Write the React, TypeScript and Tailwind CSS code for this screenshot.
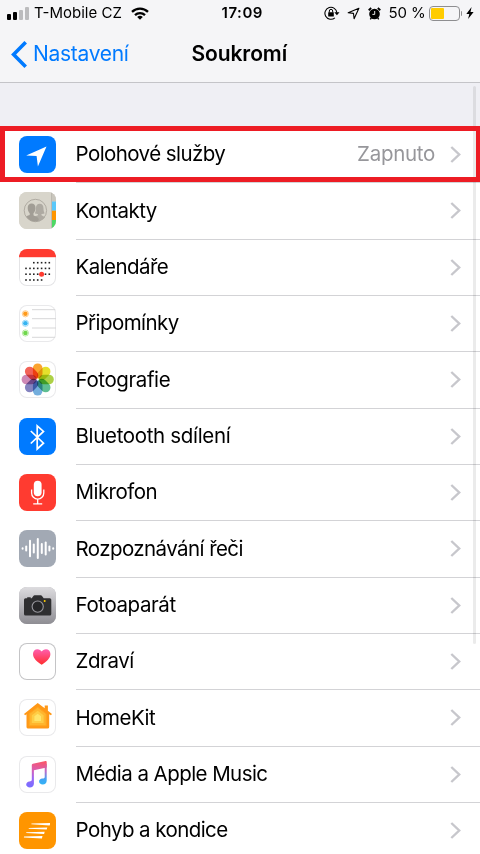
import type { ReactNode } from "react";

interface SettingsItem {
  label: string;
  icon: ReactNode;
  /** Tailwind classes for the tile behind the glyph */
  tile: string;
  labelClass: string;
  value?: string;
}

const CALENDAR_COLUMNS = [7, 11, 14.8, 18.7, 22.6, 26.5, 30.3];
const CALENDAR_ROWS = [
  { y: 13.7, from: 2, to: 7 },
  { y: 19.4, from: 0, to: 7 },
  { y: 25.2, from: 0, to: 7 },
  { y: 31, from: 0, to: 5 },
];

const PETALS = ["#fa9f24", "#e4df20", "#a9cf3c", "#55bb8c", "#6caadb", "#7d7cbc", "#cc83b2", "#f2594e"];

// [x, half height]
const WAVE_BARS = [
  [3.6, 0.3],
  [7.2, 2],
  [11, 7.7],
  [14.8, 4],
  [18.8, 9.6],
  [22.8, 4.4],
  [26.7, 6],
  [30.4, 2],
  [34.2, 0.3],
];

function Glyph({ children }: { children: ReactNode }) {
  return (
    <svg viewBox="0 0 37 37" className="block h-[37px] w-[37px]">
      {children}
    </svg>
  );
}

const LocationIcon = () => (
  <Glyph>
    <path d="M27.5 10.5 7.2 19.4l10.4.5 1.3 10.6z" fill="#fff" />
  </Glyph>
);

const ContactsIcon = () => (
  <Glyph>
    <rect width="37" height="37" fill="#d8d5cb" />
    <rect x="32" width="1" height="37" fill="#bcb9b0" />
    <rect x="33" width="4" height="9.5" fill="#c9c6bd" />
    <rect x="33" y="9.5" width="4" height="9.2" fill="#5ac8fa" />
    <rect x="33" y="18.7" width="4" height="9.3" fill="#ff9500" />
    <rect x="33" y="28" width="4" height="9" fill="#4cd964" />
    <circle cx="16.4" cy="18.5" r="11.2" fill="none" stroke="#aaa69d" strokeWidth="0.9" />
    <path
      d="M20.700 11.800c2.500 0 3.800 1.800 3.800 4.600 0 2.200.4 3.800 1.200 4.700-.7.8-2 .9-3.200.8v1.400c1 .8 2.700 1 3.600 2-1.700 2.400-4.200 3.800-7.300 4.200l-2.600-5.300c.9-.4 2-.5 2.700-.9v-1.400c-1.200.1-2.500 0-3.200-.8.8-.9 1.200-2.500 1.200-4.700 0-2.800 1.300-4.600 3.800-4.600z"
      fill="#aeaaa2"
    />
    <path
      d="M12.600 11.600c2.500 0 3.900 1.700 3.900 4.500 0 2.300-.8 4-2 5.200v1.900c1.500 1.100 4.800 1.300 5.300 4.200l-1 1.900c-4.800 1-9.200-.8-11.600-4.700 1-1 2.700-.9 3.500-1.500v-1.800c-1.200-1.200-2-2.900-2-5.200 0-2.800 1.400-4.500 3.900-4.500z"
      fill="#a19d95"
    />
  </Glyph>
);

const CalendarIcon = () => (
  <Glyph>
    <rect width="37" height="8.2" fill="#ff3b30" />
    {CALENDAR_ROWS.map((row) =>
      CALENDAR_COLUMNS.slice(row.from, row.to).map((x) => (
        <rect key={`${x}-${row.y}`} x={x - 0.8} y={row.y - 0.8} width="1.6" height="1.6" fill="#222" />
      ))
    )}
    <circle cx="22.6" cy="25.2" r="2.5" fill="#ff3b30" />
  </Glyph>
);

const RemindersIcon = () => (
  <Glyph>
    {[4.7, 13.7, 23, 32.3].map((y) => (
      <path key={y} d={`M13 ${y}H37`} stroke="#d2d2d4" strokeWidth="0.9" />
    ))}
    {[
      { y: 8.8, color: "#ff9a1a" },
      { y: 18.3, color: "#35b4f2" },
      { y: 28, color: "#70d84c" },
    ].map(({ y, color }) => (
      <g key={y}>
        <circle cx="6.4" cy={y} r="3.1" fill="none" stroke={color} strokeWidth="0.7" opacity="0.7" />
        <circle cx="6.4" cy={y} r="2.3" fill={color} />
      </g>
    ))}
  </Glyph>
);

const PhotosIcon = () => (
  <Glyph>
    {PETALS.map((color, i) => (
      <rect
        key={color}
        x="13.9"
        y="2.4"
        width="9.6"
        height="15"
        rx="4.8"
        fill={color}
        opacity="0.95"
        transform={`rotate(${i * 45} 18.7 18.5)`}
        className="mix-blend-multiply"
      />
    ))}
  </Glyph>
);

const BluetoothIcon = () => (
  <Glyph>
    <path d="M11.800 13 24.500 25.200 18.200 31V7.800l6.300 5.600L11.800 25.500" fill="none" stroke="#fff" strokeWidth="1.700" />
  </Glyph>
);

const MicrophoneIcon = () => (
  <Glyph>
    <rect x="14.800" y="6.800" width="7.800" height="15.400" rx="3.900" fill="#fff" />
    <path d="M12.600 15.500v3.500a6.100 6.100 0 0 0 12.200 0v-3.500M18.700 25.200v4.700M14.200 29.900h9" fill="none" stroke="#fff" strokeWidth="1.300" />
  </Glyph>
);

const SpeechIcon = () => (
  <Glyph>
    {WAVE_BARS.map(([x, h]) => (
      <path key={x} d={`M${x} ${18.5 - h}V${18.5 + h}`} stroke="#fff" strokeWidth="2" strokeLinecap="round" />
    ))}
  </Glyph>
);

const CameraIcon = () => (
  <Glyph>
    <defs>
      <linearGradient id="camera" x1="0" y1="0" x2="0" y2="1">
        <stop offset="0" stopColor="#dddcdf" />
        <stop offset="1" stopColor="#8e8d93" />
      </linearGradient>
    </defs>
    <rect width="37" height="37" fill="url(#camera)" />
    <path
      d="M6.500 11.300h1.700v-1.100h3.500v1.100h1l1.700-2.400q.4-.6 1.200-.6h6.200q.8 0 1.200.6l1.700 2.400h6.100q1.500 0 1.500 1.500v14.300q0 1.500-1.500 1.500H6.500Q5 28.600 5 27.100V12.800q0-1.500 1.500-1.500z"
      fill="#2f2f31"
    />
    <circle cx="18.700" cy="19.600" r="5.600" fill="#252527" stroke="#98979d" strokeWidth="1.100" />
    <circle cx="25.700" cy="14" r="1" fill="#ffcc00" />
  </Glyph>
);

const HealthIcon = () => (
  <Glyph>
    <defs>
      <linearGradient id="heart" x1="0" y1="0" x2="0" y2="1">
        <stop offset="0" stopColor="#ff5fb0" />
        <stop offset="1" stopColor="#ff2d2d" />
      </linearGradient>
    </defs>
    <path
      d="M22.700 21.700c-5.200-3.300-8.700-6.600-8.700-10.700 0-2.900 2-4.800 4.400-4.800 2 0 3.500.9 4.300 2.400.8-1.500 2.300-2.400 4.300-2.400 2.400 0 4.400 1.900 4.400 4.800 0 4.100-3.500 7.400-8.700 10.700z"
      fill="url(#heart)"
    />
  </Glyph>
);

const HomeKitIcon = () => (
  <Glyph>
    <path
      d="M18.700 4 25.700 9.300V6.500h3.200v5.300l4.100 3.100-1.100 1.400-1.700-1.100v12.700q0 1.700-1.700 1.700H9.200q-1.700 0-1.700-1.700V15.200l-1.400 1.100L5 14.900z"
      fill="#ff9817"
    />
    <path d="M18.700 8.300 27.200 14.800v12H10.200v-12z" fill="#ffb52e" stroke="#ffa51f" strokeWidth="1" />
    <path d="M18.700 11.700 24.600 16.200v7.800H12.800v-7.800z" fill="#ffcd45" />
    <path d="M18.700 14.700 22 17.300v4.800h-6.600v-4.800z" fill="#ffe46a" />
  </Glyph>
);

const MusicIcon = () => (
  <Glyph>
    <defs>
      <linearGradient id="note" gradientUnits="userSpaceOnUse" x1="22" y1="5" x2="17" y2="31">
        <stop offset="0" stopColor="#fb5568" />
        <stop offset="0.400" stopColor="#d75fb4" />
        <stop offset="0.700" stopColor="#9d67f5" />
        <stop offset="1" stopColor="#7a6cff" />
      </linearGradient>
      <linearGradient id="noteRight" gradientUnits="userSpaceOnUse" x1="26" y1="5" x2="26" y2="28">
        <stop offset="0" stopColor="#fb5568" />
        <stop offset="0.450" stopColor="#b96bcb" />
        <stop offset="0.800" stopColor="#3fa5f5" />
        <stop offset="1" stopColor="#35b2f5" />
      </linearGradient>
    </defs>
    <path
      d="M12.800 9q0-1.100 1.100-1.300L26.600 5q1.100-.2 1.100.9v5.600l-12.800 2.700v13.500c0 2.300-1.800 3.800-4 3.800-2.100 0-3.700-1.200-3.700-2.900 0-1.800 1.400-2.900 3.200-3.200 1.400-.2 2.400-.4 2.400-1.700z"
      fill="url(#note)"
    />
    <path
      d="M25.700 8.500l2-1v17c0 2.600-1.600 4-4 4-2.200 0-3.600-1.200-3.600-2.900 0-1.700 1.300-2.700 3.200-3 1.400-.3 2.400-.4 2.400-1.700z"
      fill="url(#noteRight)"
    />
  </Glyph>
);

const MotionIcon = () => (
  <Glyph>
    <path
      d="M12.500 11.400 31 11v1.600l-.4 1-18.300-1.300zM9.800 15.900l18.500-.5-.6 2.200-18-.9zM7.300 20.200l18.400-.5-.6 2.200-17.900-.9zM5 24.500l18.500-.5-.6 2.400L4.900 25.400z"
      fill="#fff"
    />
  </Glyph>
);

const ITEMS: SettingsItem[] = [
  { label: "Polohové služby", icon: <LocationIcon />, tile: "bg-[#007aff]", labelClass: "tracking-[-0.57px]", value: "Zapnuto" },
  { label: "Kontakty", icon: <ContactsIcon />, tile: "bg-[#d8d5cb]", labelClass: "tracking-[-0.54px]" },
  { label: "Kalendáře", icon: <CalendarIcon />, tile: "bg-white inset-ring inset-ring-[#e4e4e6]", labelClass: "tracking-[-0.55px]" },
  { label: "Připomínky", icon: <RemindersIcon />, tile: "bg-white inset-ring inset-ring-[#e9e9eb]", labelClass: "tracking-[-0.55px]" },
  { label: "Fotografie", icon: <PhotosIcon />, tile: "bg-white inset-ring inset-ring-[#e9e9eb]", labelClass: "tracking-[-0.4px]" },
  { label: "Bluetooth sdílení", icon: <BluetoothIcon />, tile: "bg-[#007aff]", labelClass: "tracking-[-0.33px]" },
  { label: "Mikrofon", icon: <MicrophoneIcon />, tile: "bg-[#ff3b30]", labelClass: "tracking-[-0.54px]" },
  { label: "Rozpoznávání řeči", icon: <SpeechIcon />, tile: "bg-[#a2a9b4]", labelClass: "tracking-[-0.58px]" },
  { label: "Fotoaparát", icon: <CameraIcon />, tile: "bg-[#b5b4b9]", labelClass: "tracking-[-0.4px]" },
  { label: "Zdraví", icon: <HealthIcon />, tile: "bg-white inset-ring inset-ring-[#c4c4c6]", labelClass: "tracking-[-0.42px]" },
  { label: "HomeKit", icon: <HomeKitIcon />, tile: "bg-white inset-ring inset-ring-[#e9e9eb]", labelClass: "tracking-[-0.5px]" },
  { label: "Média a Apple Music", icon: <MusicIcon />, tile: "bg-white inset-ring inset-ring-[#e9e9eb]", labelClass: "tracking-[-0.56px]" },
  { label: "Pohyb a kondice", icon: <MotionIcon />, tile: "bg-[#ff9500]", labelClass: "tracking-[-0.57px]" },
];

function StatusBar() {
  return (
    <div className="flex h-[26px] items-center pl-[7px] pr-1.5 text-[15px] text-black">
      <div className="flex w-[214.500px] items-center">
        <div className="flex h-[13px] items-end gap-[2px]">
          <span className="h-[6px] w-[4px] rounded-[1px] bg-black" />
          <span className="h-[8px] w-[4px] rounded-[1px] bg-black" />
          <span className="h-[10px] w-[4px] rounded-[1px] bg-[#bcbcbe]" />
          <span className="h-[13px] w-[4px] rounded-[1px] bg-[#bcbcbe]" />
        </div>
        <span className="ml-[5px] whitespace-nowrap">T-Mobile CZ</span>
        <svg viewBox="0 0 18 13" className="ml-[9px] h-[13px] w-[18px]">
          <g fill="none" stroke="#000" strokeWidth="2.300">
            <path d="M1 4.900a11.500 11.500 0 0 1 16 0" />
            <path d="M4 8.200a7.200 7.200 0 0 1 10 0" />
          </g>
          <path d="M9 12.800 6.200 10a4 4 0 0 1 5.600 0z" />
        </svg>
      </div>
      <span className="font-semibold tracking-[0.55px]">17:09</span>
      <div className="flex flex-1 items-center justify-end">
        {/* rotation lock */}
        <svg viewBox="0 0 16 14" className="h-[14px] w-[16px]" fill="none" stroke="#000">
          <path d="M10.900 11.800A6 6 0 1 1 12.900 6.800" strokeWidth="1.100" />
          <path d="M10.300 6.200h5.200L12.900 9.300z" fill="#000" stroke="none" />
          <rect x="4.200" y="6.200" width="5.600" height="4.200" rx="0.500" fill="#000" stroke="none" />
          <path d="M5.300 6.500V5a1.700 1.700 0 0 1 3.400 0v1.500" strokeWidth="1" />
        </svg>
        <svg viewBox="0 0 13 13" className="ml-[7px] h-[13px] w-[13px]" fill="none" stroke="#000">
          <path d="M11.900 1.200 1.200 5.800l5.300.6.600 5.400z" strokeWidth="1.100" strokeLinejoin="round" />
        </svg>
        {/* alarm */}
        <svg viewBox="0 0 13 13" className="ml-[8px] h-[13px] w-[13px]">
          <circle cx="6.500" cy="7" r="5.300" />
          <path d="M.700 3.200 3.200 1M12.300 3.200 9.800 1" stroke="#000" strokeWidth="1.800" />
          <path d="M3.300 10.800 2.300 12.400M9.700 10.800l1 1.600" stroke="#000" strokeWidth="1.400" />
          <path d="M6.700 4v3.400H4.400" fill="none" stroke="#fff" strokeWidth="0.900" />
        </svg>
        <span className="ml-[8px] whitespace-nowrap tracking-[-0.15px]">50 %</span>
        <div className="ml-[3px] flex h-[15px] w-[31px] rounded-[4px] border border-[#8e8e90] p-[1px]">
          <span className="w-[13px] rounded-[1px] bg-[#ffcc00]" />
        </div>
        <span className="ml-[1px] h-[5px] w-[1.500px] rounded-r-full bg-[#8e8e90]" />
        <svg viewBox="0 0 8 12" className="ml-[4px] h-[12px] w-[8px]">
          <path d="M5.600 0 .3 6.900h3L2.100 12l5.500-7H4.500z" />
        </svg>
      </div>
    </div>
  );
}

function NavBar() {
  return (
    <div className="flex h-[56px] items-center">
      <div className="flex w-[191.500px] items-center pl-[11px] text-[#007aff]">
        <svg viewBox="0 0 16 27" className="h-[27px] w-[16px]" fill="none" stroke="currentColor" strokeWidth="3.600">
          <path d="M14.700 1.300 2.600 13.500l12.100 12.200" />
        </svg>
        <span className="ml-[6px] text-[21px] tracking-[-0.3px]">Nastavení</span>
      </div>
      <h1 className="text-[21px] font-semibold tracking-[-0.1px] text-black">Soukromí</h1>
    </div>
  );
}

function SettingsRow({ item }: { item: SettingsItem }) {
  return (
    <li className="flex h-[56.330px] shrink-0 items-center pl-[19px]">
      <div className={`mb-[1.500px] h-[37px] w-[37px] shrink-0 overflow-hidden rounded-[8px] ${item.tile}`}>{item.icon}</div>
      <div className="ml-[19.500px] flex h-full flex-1 items-center border-b border-[#d3d3d6] pr-[19px]">
        <span className={`flex-1 whitespace-nowrap text-[20.500px] text-black ${item.labelClass}`}>{item.label}</span>
        {item.value && <span className="mr-[15px] text-[20.500px] tracking-[-0.300px] text-[#97979b]">{item.value}</span>}
        <svg viewBox="0 0 11 17" className="h-[17px] w-[11px]" fill="none" stroke="#c7c7cc" strokeWidth="2.400">
          <path d="M1.300 1 9.200 8.500 1.300 16" />
        </svg>
      </div>
    </li>
  );
}

export default function App() {
  return (
    <div className="relative flex h-[854px] w-[480px] flex-col overflow-hidden bg-white font-['Inter','Liberation_Sans',sans-serif]">
      <header className="shrink-0 border-b border-[#c4c4c8] bg-[#f5f5f7]">
        <StatusBar />
        <NavBar />
      </header>
      <div className="h-[44px] shrink-0 bg-[#efeff4]" />
      <ul className="flex flex-col">
        {ITEMS.map((item) => (
          <SettingsRow key={item.label} item={item} />
        ))}
      </ul>

      {/* Scroll indicator */}
      <div className="absolute right-[4px] top-[86px] h-[558px] w-[3px] rounded-full bg-black/8" />
      {/* Highlight around the first row */}
      <div className="absolute inset-x-0 top-[126px] h-[56px] border-[5px] border-r-[4px] border-[#ed1c24]" />
    </div>
  );
}
